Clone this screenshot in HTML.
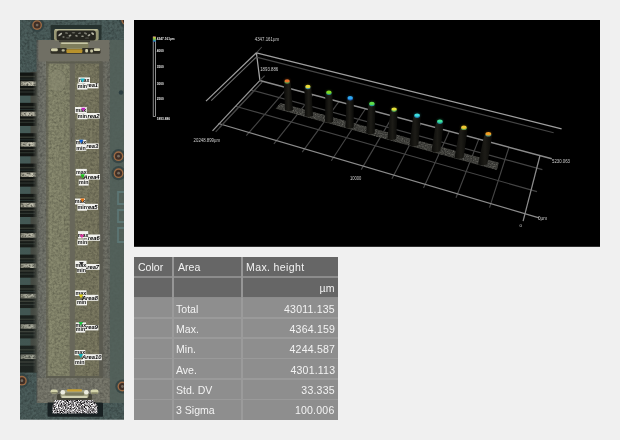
<!DOCTYPE html>
<html><head><meta charset="utf-8"><title>Measurement</title>
<style>
html,body{margin:0;padding:0;}
body{width:620px;height:440px;background:#f0f0f0;overflow:hidden;position:relative;font-family:"Liberation Sans",sans-serif;}
#scene{position:absolute;left:0;top:0;width:620px;height:440px;}
#scene text{font-family:"Liberation Sans",sans-serif;}
#tbl{position:absolute;left:134px;top:256.8px;width:204px;height:162.9px;background:#8e8e8e;overflow:hidden;font-size:11.6px;color:#f3f3f3;}
.row{position:absolute;left:0;width:204px;height:20.3625px;}
.hl{position:absolute;left:0;width:204px;height:1.6px;}
.vl{position:absolute;width:1.6px;}
.row.h{background:#666666;}
.row span i{font-style:normal;display:inline-block;transform:scaleX(0.91);transform-origin:0 50%;}
.c3.r i{transform-origin:100% 50%;}
.row span{position:absolute;top:0;height:100%;line-height:20.4px;white-space:nowrap;box-sizing:border-box;}
.c1{left:0;width:39px;padding-left:4.3px;}
.c2{left:39px;width:69.7px;padding-left:3.2px;}
.c3{left:108.7px;width:95.3px;padding-left:3.4px;}
.row.h .c2{padding-left:4.8px;}
.c3.r{text-align:right;padding-right:3.1px;letter-spacing:0.22px;}
.row.b span{line-height:22.2px;}
.row.h .c3{letter-spacing:0.4px;}
.row.h .c3.r{letter-spacing:0.22px;line-height:21.6px;}
</style></head><body>
<svg id="scene" width="620" height="440" viewBox="0 0 620 440">
<defs>
<filter id="grain" color-interpolation-filters="sRGB" x="0" y="0" width="100%" height="100%"><feTurbulence type="fractalNoise" baseFrequency="0.42" numOctaves="3" seed="3" result="n"/><feColorMatrix in="n" type="matrix" values="0 0 0 0 0  0 0 0 0 0  0 0 0 0 0  0.32 0.32 0 0 -0.24" result="a"/><feComposite in="a" in2="SourceGraphic" operator="in" result="d"/><feMerge><feMergeNode in="SourceGraphic"/><feMergeNode in="d"/></feMerge></filter>
<filter id="pcb" color-interpolation-filters="sRGB" x="0" y="0" width="100%" height="100%"><feTurbulence type="fractalNoise" baseFrequency="0.4" numOctaves="3" seed="11" result="n"/><feColorMatrix in="n" type="matrix" values="0 0 0 0 0  0 0 0 0 0  0 0 0 0 0  0.38 0.38 0 0 -0.29" result="a"/><feComposite in="a" in2="SourceGraphic" operator="in" result="d"/><feMerge><feMergeNode in="SourceGraphic"/><feMergeNode in="d"/></feMerge></filter>
<filter id="metal" color-interpolation-filters="sRGB" x="0" y="0" width="100%" height="100%"><feTurbulence type="fractalNoise" baseFrequency="0.5" numOctaves="2" seed="5" result="n"/><feColorMatrix in="n" type="matrix" values="1.7 0 0 0 -0.58  1.7 0 0 0 -0.58  1.6 0 0 0 -0.56  0 0 0 0 1" result="a"/><feComposite in="a" in2="SourceGraphic" operator="in"/></filter>
<filter id="spk" color-interpolation-filters="sRGB" x="0" y="0" width="100%" height="100%"><feTurbulence type="fractalNoise" baseFrequency="0.9" numOctaves="2" seed="2" result="n"/><feColorMatrix in="n" type="matrix" values="0 0 0 0 0.85  0 0 0 0 0.85  0 0 0 0 0.8  0.7 0 0 0 -0.33" result="w"/><feColorMatrix in="n" type="matrix" values="0 0 0 0 0  0 0 0 0 0  0 0 0 0 0  0 0.8 0 0 -0.3" result="k"/><feMerge result="m"><feMergeNode in="SourceGraphic"/><feMergeNode in="k"/><feMergeNode in="w"/></feMerge><feComposite in="m" in2="SourceGraphic" operator="in"/></filter>
<linearGradient id="pg" x1="0" x2="1" y1="0" y2="0"><stop offset="0" stop-color="#0b0b09"/><stop offset="0.5" stop-color="#1e1d18"/><stop offset="1" stop-color="#0a0a08"/></linearGradient>
<linearGradient id="rb" x1="0" x2="0" y1="0" y2="1"><stop offset="0" stop-color="#a02818"/><stop offset="0.14" stop-color="#d0c838"/><stop offset="0.5" stop-color="#78c848"/><stop offset="0.75" stop-color="#30a0a0"/><stop offset="1" stop-color="#2858c8"/></linearGradient>
<linearGradient id="wallg" x1="0" x2="1" y1="0" y2="0"><stop offset="0" stop-color="#585c57"/><stop offset="0.04" stop-color="#70726a"/><stop offset="0.125" stop-color="#76786e"/><stop offset="0.88" stop-color="#69695f"/><stop offset="0.95" stop-color="#727369"/><stop offset="1" stop-color="#676b63"/></linearGradient>
<linearGradient id="chang" x1="0" x2="1" y1="0" y2="0"><stop offset="0" stop-color="#727262"/><stop offset="0.06" stop-color="#8a8b70"/><stop offset="0.4" stop-color="#86876d"/><stop offset="0.5" stop-color="#7c7c66"/><stop offset="0.56" stop-color="#7d7c63"/><stop offset="0.95" stop-color="#7b7961"/><stop offset="1" stop-color="#64655a"/></linearGradient>
<linearGradient id="silv" x1="0" x2="1" y1="0" y2="0"><stop offset="0" stop-color="#9a9888"/><stop offset="0.3" stop-color="#b4b2a2"/><stop offset="0.75" stop-color="#cac8b6"/><stop offset="1" stop-color="#a09e90"/></linearGradient>
<filter id="mott" color-interpolation-filters="sRGB" x="0" y="0" width="100%" height="100%"><feTurbulence type="fractalNoise" baseFrequency="0.45 0.7" numOctaves="2" seed="4" result="n"/><feColorMatrix in="n" type="matrix" values="0 0 0 0 0.2  0 0 0 0 0.2  0 0 0 0 0.17  2.0 0 0 0 -0.85" result="a"/><feComposite in="a" in2="SourceGraphic" operator="in" result="d"/><feMerge><feMergeNode in="SourceGraphic"/><feMergeNode in="d"/></feMerge></filter>
<filter id="glit" color-interpolation-filters="sRGB" x="0" y="0" width="100%" height="100%"><feTurbulence type="fractalNoise" baseFrequency="1.3" numOctaves="1" seed="9" result="n"/><feColorMatrix in="n" type="matrix" values="2.6 0 0 0 -0.72  2.6 0 0 0 -0.73  2.6 0 0 0 -0.72  0 0 0 0 1" result="a"/><feComposite in="a" in2="SourceGraphic" operator="in"/></filter>
<filter id="glow" color-interpolation-filters="sRGB" x="-50%" y="-50%" width="200%" height="200%"><feGaussianBlur stdDeviation="0.8"/></filter>
<filter id="lblur" color-interpolation-filters="sRGB" x="0" y="0" width="100%" height="100%" filterUnits="userSpaceOnUse"><feGaussianBlur stdDeviation="0.42"/></filter>
<filter id="lblur2" color-interpolation-filters="sRGB" x="0" y="0" width="100%" height="100%" filterUnits="userSpaceOnUse"><feGaussianBlur stdDeviation="0.3"/></filter>
<filter id="soft" color-interpolation-filters="sRGB" x="-2%" y="-2%" width="104%" height="104%"><feGaussianBlur stdDeviation="0.55"/></filter>
<filter id="soft2" color-interpolation-filters="sRGB" x="-2%" y="-2%" width="104%" height="104%"><feGaussianBlur stdDeviation="0.3"/></filter>
<clipPath id="pclip"><rect x="20" y="20" width="104" height="399.7"/></clipPath>
<linearGradient id="pinfade" x1="0" x2="0" y1="0" y2="1"><stop offset="0" stop-color="#3a4844" stop-opacity="0"/><stop offset="1" stop-color="#3a4844" stop-opacity="0.3"/></linearGradient>
<linearGradient id="pinshade" x1="0" x2="1" y1="0" y2="0"><stop offset="0" stop-color="#4a4d48" stop-opacity="0"/><stop offset="1" stop-color="#55584f" stop-opacity="0.95"/></linearGradient>
</defs>
<rect x="134" y="20" width="466" height="226.8" fill="#000"/>
<g id="plot" opacity="0.995">
<g filter="url(#lblur)"><line x1="235.5" y1="106.2" x2="537.0" y2="191.6" stroke="#464646" stroke-width="1.15" stroke-opacity="1"/>
<line x1="250.9" y1="89.9" x2="542.4" y2="169.6" stroke="#464646" stroke-width="1.15" stroke-opacity="1"/>
<line x1="509.0" y1="147.2" x2="489.5" y2="207.6" stroke="#464646" stroke-width="1.15" stroke-opacity="1"/>
<line x1="478.8" y1="139.1" x2="456.0" y2="197.7" stroke="#464646" stroke-width="1.15" stroke-opacity="1"/>
<line x1="449.4" y1="131.3" x2="423.5" y2="188.1" stroke="#464646" stroke-width="1.15" stroke-opacity="1"/>
<line x1="420.8" y1="123.6" x2="391.9" y2="178.7" stroke="#464646" stroke-width="1.15" stroke-opacity="1"/>
<line x1="392.8" y1="116.1" x2="361.2" y2="169.6" stroke="#464646" stroke-width="1.15" stroke-opacity="1"/>
<line x1="365.5" y1="108.8" x2="331.3" y2="160.8" stroke="#464646" stroke-width="1.15" stroke-opacity="1"/>
<line x1="338.9" y1="101.7" x2="302.2" y2="152.2" stroke="#464646" stroke-width="1.15" stroke-opacity="1"/>
<line x1="313.0" y1="94.7" x2="273.9" y2="143.8" stroke="#464646" stroke-width="1.15" stroke-opacity="1"/>
<line x1="287.6" y1="87.9" x2="246.3" y2="135.6" stroke="#464646" stroke-width="1.15" stroke-opacity="1"/>
<line x1="262.8" y1="81.3" x2="219.4" y2="127.7" stroke="#464646" stroke-width="1.15" stroke-opacity="1"/>
<line x1="218.5" y1="123.5" x2="539.0" y2="217.8" stroke="#8c8c8c" stroke-width="1.25" stroke-opacity="1"/>
<line x1="259.8" y1="80.5" x2="551.8" y2="158.7" stroke="#8c8c8c" stroke-width="1.5" stroke-opacity="1"/>
<line x1="540.0" y1="155.5" x2="523.1" y2="221.2" stroke="#8c8c8c" stroke-width="1.25" stroke-opacity="1"/>
<line x1="259.7" y1="80.6" x2="212.5" y2="130.9" stroke="#989898" stroke-width="1.25" stroke-opacity="1"/>
<line x1="261.7" y1="82.6" x2="215.7" y2="131.8" stroke="#464646" stroke-width="1.15" stroke-opacity="1"/>
<line x1="256.4" y1="52.8" x2="259.9" y2="80.4" stroke="#a4a4a4" stroke-width="1.25" stroke-opacity="1"/>
<line x1="256.4" y1="52.8" x2="261.8" y2="47.0" stroke="#464646" stroke-width="1.05" stroke-opacity="1"/>
<line x1="259.9" y1="80.4" x2="264.7" y2="75.6" stroke="#464646" stroke-width="1.05" stroke-opacity="1"/>
<line x1="256.4" y1="52.8" x2="561.6" y2="128.8" stroke="#a0a0a0" stroke-width="1.25" stroke-opacity="1"/>
<line x1="257.4" y1="57.4" x2="553.7" y2="132.7" stroke="#464646" stroke-width="1.15" stroke-opacity="1"/>
<line x1="256.4" y1="52.8" x2="206.0" y2="101.1" stroke="#a0a0a0" stroke-width="1.25" stroke-opacity="1"/>
<line x1="256.0" y1="57.4" x2="211.2" y2="100.7" stroke="#6a6a6a" stroke-width="1.15" stroke-opacity="1"/></g>
<g filter="url(#lblur2)"><polygon points="275.4,108.8 280.4,102.7 499.0,162.5 497.0,170.2" fill="#41413d" filter="url(#spk)"/>
<path d="M284.4,81.6 C283.7,83.0 283.8,85.0 283.9,87.3 L285.0,110.1 Q289.0,112.3 293.0,110.1 L291.0,87.3 C290.9,85.0 290.8,83.0 289.8,81.6 Z" fill="url(#pg)"/>
<ellipse cx="287.1" cy="81.9" rx="2.7" ry="1.8" fill="#35c060" opacity="0.8"/>
<ellipse cx="287.1" cy="80.9" rx="3.2" ry="2.3" fill="#e8742c" opacity="0.22" filter="url(#glow)"/>
<ellipse cx="287.1" cy="80.9" rx="2.6" ry="1.7" fill="#e8742c"/>
<path d="M305.2,87.2 C304.4,88.6 304.4,90.6 304.5,92.9 L304.9,115.8 Q309.0,118.0 313.0,115.8 L311.7,92.9 C311.6,90.6 311.6,88.6 310.6,87.2 Z" fill="url(#pg)"/>
<ellipse cx="307.9" cy="87.5" rx="2.7" ry="1.8" fill="#30a0d0" opacity="0.8"/>
<ellipse cx="307.9" cy="86.5" rx="3.2" ry="2.3" fill="#e9dc3a" opacity="0.22" filter="url(#glow)"/>
<ellipse cx="307.9" cy="86.5" rx="2.6" ry="1.7" fill="#e9dc3a"/>
<path d="M326.1,92.9 C325.2,94.3 325.2,96.3 325.3,98.6 L325.0,121.7 Q329.1,123.9 333.2,121.7 L332.6,98.6 C332.6,96.3 332.6,94.3 331.7,92.9 Z" fill="url(#pg)"/>
<ellipse cx="328.9" cy="93.2" rx="2.8" ry="1.8" fill="#20a0c0" opacity="0.8"/>
<ellipse cx="328.9" cy="92.2" rx="3.3" ry="2.3" fill="#7fdc24" opacity="0.22" filter="url(#glow)"/>
<ellipse cx="328.9" cy="92.2" rx="2.7" ry="1.7" fill="#7fdc24"/>
<path d="M347.4,98.5 C346.4,99.9 346.4,101.9 346.3,104.2 L345.4,127.4 Q349.6,129.6 353.8,127.4 L353.8,104.2 C353.9,101.9 353.9,99.9 353.0,98.5 Z" fill="url(#pg)"/>
<ellipse cx="350.2" cy="98.8" rx="2.8" ry="1.8" fill="#2060d0" opacity="0.8"/>
<ellipse cx="350.2" cy="97.8" rx="3.3" ry="2.3" fill="#2fa8f0" opacity="0.22" filter="url(#glow)"/>
<ellipse cx="350.2" cy="97.8" rx="2.7" ry="1.7" fill="#2fa8f0"/>
<path d="M369.1,104.1 C368.0,105.5 367.9,107.6 367.8,109.9 L366.2,133.2 Q370.4,135.4 374.7,133.2 L375.4,109.9 C375.5,107.6 375.6,105.5 374.7,104.1 Z" fill="url(#pg)"/>
<ellipse cx="371.9" cy="104.4" rx="2.8" ry="1.8" fill="#20b0c0" opacity="0.8"/>
<ellipse cx="371.9" cy="103.4" rx="3.3" ry="2.3" fill="#5fe04a" opacity="0.22" filter="url(#glow)"/>
<ellipse cx="371.9" cy="103.4" rx="2.7" ry="1.7" fill="#5fe04a"/>
<path d="M391.3,109.8 C390.0,111.3 389.9,113.3 389.8,115.6 L387.4,139.0 Q391.8,141.2 396.1,139.0 L397.5,115.6 C397.7,113.3 397.8,111.3 396.9,109.8 Z" fill="url(#pg)"/>
<ellipse cx="394.1" cy="110.1" rx="2.8" ry="1.8" fill="#40c070" opacity="0.8"/>
<ellipse cx="394.1" cy="109.1" rx="3.3" ry="2.3" fill="#e6e23a" opacity="0.22" filter="url(#glow)"/>
<ellipse cx="394.1" cy="109.1" rx="2.7" ry="1.7" fill="#e6e23a"/>
<path d="M414.2,115.8 C412.9,117.3 412.8,119.3 412.5,121.6 L409.5,145.2 Q413.9,147.4 418.3,145.2 L420.4,121.6 C420.7,119.3 420.8,117.3 420.0,115.8 Z" fill="url(#pg)"/>
<ellipse cx="417.1" cy="116.1" rx="2.9" ry="1.8" fill="#2090d0" opacity="0.8"/>
<ellipse cx="417.1" cy="115.1" rx="3.4" ry="2.3" fill="#3fe0e0" opacity="0.22" filter="url(#glow)"/>
<ellipse cx="417.1" cy="115.1" rx="2.8" ry="1.7" fill="#3fe0e0"/>
<path d="M437.0,121.8 C435.6,123.3 435.4,125.3 435.1,127.7 L431.4,151.3 Q435.9,153.5 440.4,151.3 L443.1,127.7 C443.4,125.3 443.6,123.3 442.8,121.8 Z" fill="url(#pg)"/>
<ellipse cx="439.9" cy="122.1" rx="2.9" ry="1.8" fill="#20a0c0" opacity="0.8"/>
<ellipse cx="439.9" cy="121.1" rx="3.4" ry="2.3" fill="#3fe59a" opacity="0.22" filter="url(#glow)"/>
<ellipse cx="439.9" cy="121.1" rx="2.8" ry="1.7" fill="#3fe59a"/>
<path d="M461.0,128.0 C459.4,129.5 459.2,131.5 458.8,133.9 L454.5,157.7 Q459.0,159.9 463.6,157.7 L467.0,133.9 C467.4,131.5 467.6,129.5 466.8,128.0 Z" fill="url(#pg)"/>
<ellipse cx="463.9" cy="128.3" rx="2.9" ry="1.8" fill="#60c060" opacity="0.8"/>
<ellipse cx="463.9" cy="127.3" rx="3.4" ry="2.3" fill="#f0c832" opacity="0.22" filter="url(#glow)"/>
<ellipse cx="463.9" cy="127.3" rx="2.8" ry="1.7" fill="#f0c832"/>
<path d="M485.4,134.4 C483.8,135.9 483.6,138.0 483.1,140.3 L478.1,164.2 Q482.7,166.4 487.3,164.2 L491.4,140.3 C491.9,138.0 492.1,135.9 491.3,134.4 Z" fill="url(#pg)"/>
<ellipse cx="488.4" cy="134.7" rx="3.0" ry="1.8" fill="#50b0a0" opacity="0.8"/>
<ellipse cx="488.4" cy="133.7" rx="3.5" ry="2.3" fill="#f5a024" opacity="0.22" filter="url(#glow)"/>
<ellipse cx="488.4" cy="133.7" rx="2.9" ry="1.7" fill="#f5a024"/>
<rect x="153.2" y="36.8" width="2.4" height="79.6" fill="#000" stroke="#c8c8c8" stroke-width="0.7"/>
<rect x="153.2" y="36.6" width="2.4" height="5.2" fill="url(#rb)"/>
<text x="156.8" y="40.4" font-size="3.15" fill="#ececec" font-weight="700" text-anchor="start">4347.161µm</text>
<text x="156.8" y="52.3" font-size="3.15" fill="#ececec" font-weight="700" text-anchor="start">4000</text>
<text x="156.8" y="67.9" font-size="3.15" fill="#ececec" font-weight="700" text-anchor="start">3500</text>
<text x="156.8" y="84.5" font-size="3.15" fill="#ececec" font-weight="700" text-anchor="start">3000</text>
<text x="156.8" y="100.4" font-size="3.15" fill="#ececec" font-weight="700" text-anchor="start">2500</text>
<text x="156.8" y="119.6" font-size="3.15" fill="#ececec" font-weight="700" text-anchor="start">1893.886</text>
<text x="254.8" y="40.9" font-size="5.0" fill="#d0d0d0" font-weight="400" text-anchor="start" textLength="24.2" lengthAdjust="spacingAndGlyphs">4347.161µm</text>
<text x="260.2" y="71.4" font-size="5.0" fill="#d0d0d0" font-weight="400" text-anchor="start" textLength="18" lengthAdjust="spacingAndGlyphs">1893.886</text>
<text x="193.6" y="141.5" font-size="5.0" fill="#d0d0d0" font-weight="400" text-anchor="start" textLength="26.4" lengthAdjust="spacingAndGlyphs">20248.899µm</text>
<text x="350" y="179.8" font-size="5.0" fill="#d0d0d0" font-weight="400" text-anchor="start" textLength="11.4" lengthAdjust="spacingAndGlyphs">10000</text>
<text x="552" y="163.3" font-size="5.0" fill="#d0d0d0" font-weight="400" text-anchor="start" textLength="18" lengthAdjust="spacingAndGlyphs">5230.063</text>
<text x="538" y="220.3" font-size="5.0" fill="#d0d0d0" font-weight="400" text-anchor="start" textLength="9" lengthAdjust="spacingAndGlyphs">0µm</text>
<text x="519.6" y="226.8" font-size="4.4" fill="#d6d6d6" font-weight="400" text-anchor="start">0</text></g>
</g>
<g id="photo" clip-path="url(#pclip)"><g filter="url(#soft)">
<rect x="20" y="20" width="104" height="400" fill="#4c5e5c" filter="url(#pcb)"/>
<rect x="110" y="40" width="14" height="363" fill="#55625b" opacity="0.85"/>
<rect x="20" y="72" width="17" height="300" fill="#445a56" />
<rect x="30.5" y="72" width="6.5" height="300" fill="#474a42" />
<rect x="36.5" y="40" width="73.5" height="363" fill="url(#wallg)" filter="url(#grain)"/>
<rect x="38.5" y="40" width="70.5" height="21.5" fill="#706f64" />
<rect x="37.5" y="378" width="72" height="25" fill="#79796d" filter="url(#grain)"/>
<rect x="46" y="61.5" width="55.5" height="316.5" fill="url(#chang)" filter="url(#grain)"/>
<rect x="69.8" y="61.5" width="5" height="316.5" fill="#68675a" />
<rect x="46" y="61.5" width="2.2" height="316.5" fill="#5d5d50" opacity="0.45"/>
<rect x="99.2" y="61.5" width="3.6" height="316.5" fill="#5a5a50" />
<rect x="46" y="61.5" width="55.5" height="2" fill="#5d5d50" />
<rect x="46" y="376" width="55.5" height="2" fill="#5d5d50" />
<ellipse cx="58" cy="80.5" rx="8.5" ry="11" fill="#8c8c74" opacity="0.45"/>
<path d="M50,70 q6,-3 12,1 q5,4 4,12 q-1,7 -6,9" fill="none" stroke="#5e5e4e" stroke-width="0.7" opacity="0.6"/>
<path d="M72,128 q-2,4 1,7 q-3,3 -1,7" fill="none" stroke="#4e4e40" stroke-width="0.8" opacity="0.6"/>
<circle cx="97" cy="72.5" r="2.6" fill="none" stroke="#5e5e4e" stroke-width="0.7" opacity="0.6"/>
<rect x="20" y="72.5" width="17" height="23.1" fill="#121512" />
<rect x="20.6" y="81.39999999999999" width="15.8" height="4.5" fill="url(#silv)" filter="url(#mott)"/>
<rect x="20" y="75.8" width="15" height="1.5" fill="#343830" />
<rect x="20" y="88.19999999999999" width="15" height="1.3" fill="#3c3e36" />
<rect x="20" y="91.39999999999999" width="15" height="1.2" fill="#2c322d" />
<rect x="20" y="78.6" width="15" height="1.0" fill="#26302e" />
<rect x="20" y="102.85" width="17" height="23.1" fill="#121512" />
<rect x="20.6" y="111.74999999999999" width="15.8" height="4.5" fill="url(#silv)" filter="url(#mott)"/>
<rect x="20" y="106.14999999999999" width="15" height="1.5" fill="#343830" />
<rect x="20" y="118.54999999999998" width="15" height="1.3" fill="#3c3e36" />
<rect x="20" y="121.74999999999999" width="15" height="1.2" fill="#2c322d" />
<rect x="20" y="108.94999999999999" width="15" height="1.0" fill="#26302e" />
<rect x="20" y="133.20000000000002" width="17" height="23.1" fill="#121512" />
<rect x="20.6" y="142.10000000000002" width="15.8" height="4.5" fill="url(#silv)" filter="url(#mott)"/>
<rect x="20" y="136.5" width="15" height="1.5" fill="#343830" />
<rect x="20" y="148.9" width="15" height="1.3" fill="#3c3e36" />
<rect x="20" y="152.10000000000002" width="15" height="1.2" fill="#2c322d" />
<rect x="20" y="139.3" width="15" height="1.0" fill="#26302e" />
<rect x="20" y="163.55" width="17" height="23.1" fill="#121512" />
<rect x="20.6" y="172.45000000000002" width="15.8" height="4.5" fill="url(#silv)" filter="url(#mott)"/>
<rect x="20" y="166.85" width="15" height="1.5" fill="#343830" />
<rect x="20" y="179.25" width="15" height="1.3" fill="#3c3e36" />
<rect x="20" y="182.45000000000002" width="15" height="1.2" fill="#2c322d" />
<rect x="20" y="169.65" width="15" height="1.0" fill="#26302e" />
<rect x="20" y="193.9" width="17" height="23.1" fill="#121512" />
<rect x="20.6" y="202.8" width="15.8" height="4.5" fill="url(#silv)" filter="url(#mott)"/>
<rect x="20" y="197.2" width="15" height="1.5" fill="#343830" />
<rect x="20" y="209.6" width="15" height="1.3" fill="#3c3e36" />
<rect x="20" y="212.8" width="15" height="1.2" fill="#2c322d" />
<rect x="20" y="200.0" width="15" height="1.0" fill="#26302e" />
<rect x="20" y="224.25" width="17" height="23.1" fill="#121512" />
<rect x="20.6" y="233.15" width="15.8" height="4.5" fill="url(#silv)" filter="url(#mott)"/>
<rect x="20" y="227.54999999999998" width="15" height="1.5" fill="#343830" />
<rect x="20" y="239.95" width="15" height="1.3" fill="#3c3e36" />
<rect x="20" y="243.15" width="15" height="1.2" fill="#2c322d" />
<rect x="20" y="230.35" width="15" height="1.0" fill="#26302e" />
<rect x="20" y="254.60000000000005" width="17" height="23.1" fill="#121512" />
<rect x="20.6" y="263.50000000000006" width="15.8" height="4.5" fill="url(#silv)" filter="url(#mott)"/>
<rect x="20" y="257.90000000000003" width="15" height="1.5" fill="#343830" />
<rect x="20" y="270.30000000000007" width="15" height="1.3" fill="#3c3e36" />
<rect x="20" y="273.50000000000006" width="15" height="1.2" fill="#2c322d" />
<rect x="20" y="260.70000000000005" width="15" height="1.0" fill="#26302e" />
<rect x="20" y="284.95" width="17" height="23.1" fill="#121512" />
<rect x="20.6" y="293.85" width="15.8" height="4.5" fill="url(#silv)" filter="url(#mott)"/>
<rect x="20" y="288.25" width="15" height="1.5" fill="#343830" />
<rect x="20" y="300.65000000000003" width="15" height="1.3" fill="#3c3e36" />
<rect x="20" y="303.85" width="15" height="1.2" fill="#2c322d" />
<rect x="20" y="291.05" width="15" height="1.0" fill="#26302e" />
<rect x="20" y="315.29999999999995" width="17" height="23.1" fill="#121512" />
<rect x="20.6" y="324.2" width="15.8" height="4.5" fill="url(#silv)" filter="url(#mott)"/>
<rect x="20" y="318.59999999999997" width="15" height="1.5" fill="#343830" />
<rect x="20" y="331.0" width="15" height="1.3" fill="#3c3e36" />
<rect x="20" y="334.2" width="15" height="1.2" fill="#2c322d" />
<rect x="20" y="321.4" width="15" height="1.0" fill="#26302e" />
<rect x="20" y="345.65" width="17" height="23.1" fill="#121512" />
<rect x="20.6" y="354.55" width="15.8" height="4.5" fill="url(#silv)" filter="url(#mott)"/>
<rect x="20" y="348.95" width="15" height="1.5" fill="#343830" />
<rect x="20" y="361.35" width="15" height="1.3" fill="#3c3e36" />
<rect x="20" y="364.55" width="15" height="1.2" fill="#2c322d" />
<rect x="20" y="351.75" width="15" height="1.0" fill="#26302e" />
<rect x="20" y="366.5" width="17" height="6" fill="#121512" />
<rect x="20" y="150" width="17" height="223" fill="url(#pinfade)" />
<rect x="32.5" y="71.6" width="5" height="301" fill="url(#pinshade)" />
<rect x="50.7" y="25" width="50.8" height="15" fill="#26322f" rx="1"/>
<rect x="54" y="29" width="44.7" height="11.5" fill="#969674" rx="2"/>
<rect x="55" y="29" width="42.7" height="1.4" fill="#babA98" rx="0.7"/>
<rect x="56.6" y="30.5" width="39.2" height="10" fill="#25251f" rx="2.5"/>
<ellipse cx="60.2" cy="34.5" rx="2.4" ry="0.9" fill="#b4b4a6" transform="rotate(-40 60.2 34.5)"/>
<ellipse cx="63.5" cy="37" rx="1.2" ry="0.8" fill="#8c8c80" transform="rotate(0 63.5 37)"/>
<ellipse cx="66.5" cy="33" rx="1.6" ry="0.8" fill="#77776c" transform="rotate(10 66.5 33)"/>
<ellipse cx="70" cy="35.6" rx="1.5" ry="0.9" fill="#9a9a8e" transform="rotate(-20 70 35.6)"/>
<ellipse cx="73.5" cy="32.8" rx="1.8" ry="0.8" fill="#66665c" transform="rotate(0 73.5 32.8)"/>
<ellipse cx="76.5" cy="35.8" rx="1.3" ry="0.9" fill="#8a8a7e" transform="rotate(15 76.5 35.8)"/>
<ellipse cx="79.5" cy="33.2" rx="1.5" ry="0.8" fill="#70706a" transform="rotate(-10 79.5 33.2)"/>
<ellipse cx="82.5" cy="36.2" rx="1.4" ry="0.8" fill="#9c9c90" transform="rotate(0 82.5 36.2)"/>
<ellipse cx="85.5" cy="33.4" rx="1.7" ry="0.9" fill="#7a7a70" transform="rotate(20 85.5 33.4)"/>
<ellipse cx="89" cy="35.2" rx="1.5" ry="0.9" fill="#a4a498" transform="rotate(-30 89 35.2)"/>
<ellipse cx="92.6" cy="33.6" rx="1.6" ry="1.0" fill="#c0c0b0" transform="rotate(40 92.6 33.6)"/>
<ellipse cx="68" cy="37.8" rx="2.2" ry="0.6" fill="#5c5c54" transform="rotate(0 68 37.8)"/>
<ellipse cx="87" cy="38" rx="2.2" ry="0.6" fill="#5c5c54" transform="rotate(0 87 38)"/>
<rect x="59" y="40.3" width="31" height="1.8" fill="#3e3e34" />
<rect x="60.3" y="42.2" width="28.2" height="5.8" fill="#7e7e5c" rx="1.2"/>
<rect x="61" y="42.4" width="27" height="1.7" fill="#c8c8a6" rx="0.8"/>
<rect x="50.5" y="48" width="50" height="5.8" fill="#302f25" rx="1.5"/>
<rect x="51" y="48.3" width="6.8" height="3" fill="#d4d2ae" rx="1.3"/>
<rect x="61.6" y="49.2" width="3.2" height="2.2" fill="#b8b698" rx="1"/>
<rect x="66.4" y="48" width="16" height="1.3" fill="#8e8c66" rx="0.6"/>
<rect x="66.4" y="49.2" width="16" height="3.8" fill="#b8922c" rx="1"/>
<rect x="85.2" y="49" width="2.8" height="3.6" fill="#d0ceaa" rx="1"/>
<rect x="90.2" y="49.6" width="2.8" height="3" fill="#c4c2a0" rx="1"/>
<rect x="93.7" y="48.3" width="6.6" height="2.8" fill="#d4d2ae" rx="1.3"/>
<rect x="47.5" y="402.5" width="55.5" height="14.2" fill="#182022" rx="1"/>
<polygon points="55,400 93,400 97.5,406 97.5,413.5 52.5,413.5 52.5,406" fill="#9c9a90" filter="url(#glit)"/>
<rect x="57" y="394" width="35" height="6" fill="#45453a" rx="1.5"/>
<rect x="50.5" y="389.5" width="7.2" height="4" fill="#d4d4ac" rx="2"/>
<rect x="51" y="392" width="6.5" height="1.6" fill="#8a8a6a" rx="0.8"/>
<rect x="60.5" y="390" width="28" height="8" fill="#a2a284" rx="2.5"/>
<rect x="65" y="392.4" width="19" height="3.2" fill="#7b7b5e" rx="1"/>
<rect x="61.5" y="396" width="26" height="2" fill="#d2d2b4" rx="1"/>
<circle cx="62.8" cy="392.3" r="2.3" fill="#ecece0"/><circle cx="86.3" cy="392.3" r="2.3" fill="#ecece0"/>
<rect x="67" y="389.2" width="15" height="2.2" fill="#c9a233" rx="0.8"/>
<rect x="90.5" y="389.5" width="8" height="4.3" fill="#d4d4ac" rx="2"/>
<rect x="91" y="392.3" width="7" height="1.6" fill="#8a8a6a" rx="0.8"/>
<circle cx="37.1" cy="25.1" r="7.1000000000000005" fill="#2c3c3d" opacity="0.7"/><circle cx="37.1" cy="25.1" r="4.9" fill="#9c6a44"/><circle cx="37.1" cy="25.1" r="3.5000000000000004" fill="#3e2e26"/><circle cx="37.1" cy="25.1" r="1.4" fill="#746c60"/>
<circle cx="118.5" cy="156.2" r="7.1000000000000005" fill="#2c3c3d" opacity="0.7"/><circle cx="118.5" cy="156.2" r="4.9" fill="#9c6a44"/><circle cx="118.5" cy="156.2" r="3.5000000000000004" fill="#3e2e26"/><circle cx="118.5" cy="156.2" r="1.4" fill="#746c60"/>
<circle cx="118.6" cy="173.2" r="7.1000000000000005" fill="#2c3c3d" opacity="0.7"/><circle cx="118.6" cy="173.2" r="4.9" fill="#9c6a44"/><circle cx="118.6" cy="173.2" r="3.5000000000000004" fill="#3e2e26"/><circle cx="118.6" cy="173.2" r="1.4" fill="#746c60"/>
<circle cx="21.9" cy="380.7" r="7.1000000000000005" fill="#2c3c3d" opacity="0.7"/><circle cx="21.9" cy="380.7" r="4.9" fill="#9c6a44"/><circle cx="21.9" cy="380.7" r="3.5000000000000004" fill="#3e2e26"/><circle cx="21.9" cy="380.7" r="1.4" fill="#746c60"/>
<circle cx="122.4" cy="386.5" r="7.1000000000000005" fill="#2c3c3d" opacity="0.7"/><circle cx="122.4" cy="386.5" r="4.9" fill="#9c6a44"/><circle cx="122.4" cy="386.5" r="3.5000000000000004" fill="#3e2e26"/><circle cx="122.4" cy="386.5" r="1.4" fill="#746c60"/>
<circle cx="126.3" cy="20.3" r="7.1000000000000005" fill="#2c3c3d" opacity="0.7"/><circle cx="126.3" cy="20.3" r="4.9" fill="#9c6a44"/><circle cx="126.3" cy="20.3" r="3.5000000000000004" fill="#3e2e26"/><circle cx="126.3" cy="20.3" r="1.4" fill="#746c60"/>
<path d="M124,192 h-6 v12 h6 m0,6 h-6 v12 h6 m0,6 h-6 v14 h6" fill="none" stroke="#5c7674" stroke-width="1.8"/>
<circle cx="121" cy="92.5" r="2.2" fill="#2c3d40"/>
</g><g filter="url(#soft2)">
<rect x="85.0" y="83.0" width="13.5" height="5.4" fill="#f2f2ee"/><text x="98.1" y="87.3" font-size="5.8" font-weight="700" fill="#000" font-style="italic" text-anchor="end">Area1</text>
<rect x="78.5" y="77.4" width="11.5" height="6.1" fill="#f2f2ee"/><text x="84.2" y="82.2" font-size="5.3" font-weight="700" fill="#101010" text-anchor="middle">max</text>
<rect x="77.3" y="83.5" width="10.2" height="6.1" fill="#f2f2ee"/><text x="82.4" y="88.3" font-size="5.3" font-weight="700" fill="#101010" text-anchor="middle">min</text>
<path d="M80.3,78.5 h4.6 l-2.3,3.9 z" fill="#19b8c8"/>
<rect x="85.0" y="113.0" width="14.8" height="5.6" fill="#f2f2ee"/><text x="99.4" y="117.5" font-size="5.8" font-weight="700" fill="#000" font-style="italic" text-anchor="end">Area2</text>
<rect x="75.0" y="107.0" width="11.8" height="6.2" fill="#f2f2ee"/><text x="80.9" y="111.9" font-size="5.3" font-weight="700" fill="#101010" text-anchor="middle">max</text>
<rect x="77.5" y="113.2" width="9.8" height="6.1" fill="#f2f2ee"/><text x="82.4" y="118.0" font-size="5.3" font-weight="700" fill="#101010" text-anchor="middle">min</text>
<path d="M81.0,107.7 h4.6 l-2.3,3.9 z" fill="#c020c0"/>
<rect x="84.5" y="143.4" width="14.2" height="5.6" fill="#f2f2ee"/><text x="98.3" y="147.9" font-size="5.8" font-weight="700" fill="#000" font-style="italic" text-anchor="end">Area3</text>
<rect x="75.8" y="139.8" width="10.5" height="5.0" fill="#f2f2ee"/><text x="81.0" y="143.5" font-size="5.3" font-weight="700" fill="#101010" text-anchor="middle">max</text>
<rect x="75.8" y="144.8" width="10.5" height="6.0" fill="#f2f2ee"/><text x="81.0" y="149.5" font-size="5.3" font-weight="700" fill="#101010" text-anchor="middle">min</text>
<path d="M78.9,139.7 h4.6 l-2.3,3.9 z" fill="#1060d0"/>
<rect x="84.5" y="174.0" width="15.5" height="5.6" fill="#f2f2ee"/><text x="99.6" y="178.5" font-size="5.8" font-weight="700" fill="#000" font-style="italic" text-anchor="end">Area4</text>
<rect x="75.8" y="168.9" width="11.0" height="6.6" fill="#f2f2ee"/><text x="81.3" y="174.2" font-size="5.3" font-weight="700" fill="#101010" text-anchor="middle">max</text>
<rect x="78.7" y="179.5" width="10.0" height="6.1" fill="#f2f2ee"/><text x="83.7" y="184.3" font-size="5.3" font-weight="700" fill="#101010" text-anchor="middle">min</text>
<path d="M80.3,174.3 h4.6 l-2.3,3.9 z" fill="#18c018"/>
<rect x="84.5" y="203.8" width="13.5" height="5.9" fill="#f2f2ee"/><text x="97.6" y="208.6" font-size="5.8" font-weight="700" fill="#000" font-style="italic" text-anchor="end">Area5</text>
<rect x="75.0" y="198.5" width="10.0" height="6.0" fill="#f2f2ee"/><text x="80.0" y="203.2" font-size="5.3" font-weight="700" fill="#101010" text-anchor="middle">max</text>
<rect x="77.4" y="204.5" width="9.6" height="6.2" fill="#f2f2ee"/><text x="82.2" y="209.4" font-size="5.3" font-weight="700" fill="#101010" text-anchor="middle">min</text>
<path d="M80.2,198.5 h4.6 l-2.3,3.9 z" fill="#e07010"/>
<rect x="86.0" y="234.5" width="14.1" height="6.3" fill="#f2f2ee"/><text x="99.7" y="239.7" font-size="5.8" font-weight="700" fill="#000" font-style="italic" text-anchor="end">Area6</text>
<rect x="78.0" y="231.1" width="10.2" height="7.4" fill="#f2f2ee"/><text x="83.1" y="237.2" font-size="5.3" font-weight="700" fill="#101010" text-anchor="middle">max</text>
<rect x="77.4" y="239.4" width="10.2" height="5.9" fill="#f2f2ee"/><text x="82.5" y="244.0" font-size="5.3" font-weight="700" fill="#101010" text-anchor="middle">min</text>
<path d="M79.6,234.4 h4.6 l-2.3,3.9 z" fill="#e030a0"/>
<rect x="85.0" y="264.0" width="14.5" height="5.8" fill="#f2f2ee"/><text x="99.1" y="268.7" font-size="5.8" font-weight="700" fill="#000" font-style="italic" text-anchor="end">Area7</text>
<rect x="75.1" y="260.7" width="11.4" height="7.3" fill="#f2f2ee"/><text x="80.8" y="266.7" font-size="5.3" font-weight="700" fill="#101010" text-anchor="middle">max</text>
<rect x="76.8" y="268.0" width="9.1" height="4.8" fill="#f2f2ee"/><text x="81.3" y="271.5" font-size="5.3" font-weight="700" fill="#101010" text-anchor="middle">min</text>
<path d="M79.1,262.1 h4.6 l-2.3,3.9 z" fill="#303030"/>
<rect x="83.6" y="294.8" width="14.8" height="6.0" fill="#f2f2ee"/><text x="98.0" y="299.7" font-size="5.8" font-weight="700" fill="#000" font-style="italic" text-anchor="end">Area8</text>
<rect x="75.1" y="290.3" width="11.4" height="5.7" fill="#f2f2ee"/><text x="80.8" y="294.7" font-size="5.3" font-weight="700" fill="#101010" text-anchor="middle">max</text>
<rect x="76.3" y="300.0" width="10.7" height="5.4" fill="#f2f2ee"/><text x="81.6" y="304.1" font-size="5.3" font-weight="700" fill="#101010" text-anchor="middle">min</text>
<path d="M78.7,294.4 h4.6 l-2.3,3.9 z" fill="#e0d010"/>
<rect x="84.0" y="325.0" width="14.4" height="5.4" fill="#f2f2ee"/><text x="98.0" y="329.3" font-size="5.8" font-weight="700" fill="#000" font-style="italic" text-anchor="end">Area9</text>
<rect x="75.7" y="322.4" width="10.3" height="5.4" fill="#f2f2ee"/><text x="80.9" y="326.5" font-size="5.3" font-weight="700" fill="#101010" text-anchor="middle">max</text>
<rect x="75.7" y="327.8" width="9.6" height="4.8" fill="#f2f2ee"/><text x="80.5" y="331.3" font-size="5.3" font-weight="700" fill="#101010" text-anchor="middle">min</text>
<path d="M78.5,321.9 h4.6 l-2.3,3.9 z" fill="#20c040"/>
<rect x="82.5" y="354.2" width="19.3" height="6.0" fill="#f2f2ee"/><text x="101.4" y="359.1" font-size="5.8" font-weight="700" fill="#000" font-style="italic" text-anchor="end">Area10</text>
<rect x="74.5" y="350.0" width="10.8" height="5.3" fill="#f2f2ee"/><text x="79.9" y="354.0" font-size="5.3" font-weight="700" fill="#101010" text-anchor="middle">max</text>
<rect x="74.5" y="359.5" width="10.3" height="5.3" fill="#f2f2ee"/><text x="79.7" y="363.5" font-size="5.3" font-weight="700" fill="#101010" text-anchor="middle">min</text>
<path d="M78.5,354.0 h4.6 l-2.3,3.9 z" fill="#10b0b8"/>
</g></g>
</svg>
<div id="tbl">
<div class="row h" style="top:0.000px"><span class="c1"><i>Color</i></span><span class="c2"><i>Area</i></span><span class="c3"><i>Max. height</i></span></div>
<div class="row h" style="top:20.363px"><span class="c1"><i></i></span><span class="c2"><i></i></span><span class="c3 r"><i>µm</i></span></div>
<div class="row b" style="top:40.725px"><span class="c1"><i></i></span><span class="c2"><i>Total</i></span><span class="c3 r"><i>43011.135</i></span></div>
<div class="row b" style="top:61.088px"><span class="c1"><i></i></span><span class="c2"><i>Max.</i></span><span class="c3 r"><i>4364.159</i></span></div>
<div class="row b" style="top:81.450px"><span class="c1"><i></i></span><span class="c2"><i>Min.</i></span><span class="c3 r"><i>4244.587</i></span></div>
<div class="row b" style="top:101.812px"><span class="c1"><i></i></span><span class="c2"><i>Ave.</i></span><span class="c3 r"><i>4301.113</i></span></div>
<div class="row b" style="top:122.175px"><span class="c1"><i></i></span><span class="c2"><i>Std. DV</i></span><span class="c3 r"><i>33.335</i></span></div>
<div class="row b" style="top:142.537px"><span class="c1"><i></i></span><span class="c2"><i>3 Sigma</i></span><span class="c3 r"><i>100.006</i></span></div>
<div class="hl" style="top:19.562px;background:#8c8c8c"></div>
<div class="hl" style="top:39.925px;background:#8c8c8c"></div>
<div class="hl" style="top:60.288px;background:#9a9a9a"></div>
<div class="hl" style="top:80.650px;background:#9a9a9a"></div>
<div class="hl" style="top:101.013px;background:#9a9a9a"></div>
<div class="hl" style="top:121.375px;background:#9a9a9a"></div>
<div class="hl" style="top:141.737px;background:#9a9a9a"></div>
<div class="vl" style="left:38.15px;top:0;height:40.725px;background:#969696"></div>
<div class="vl" style="left:38.15px;top:40.725px;height:122.2px;background:#9b9b9b"></div>
<div class="vl" style="left:107.40px;top:0;height:40.725px;background:#969696"></div>
<div class="vl" style="left:107.40px;top:40.725px;height:122.2px;background:#9b9b9b"></div>
</div>
</body></html>
